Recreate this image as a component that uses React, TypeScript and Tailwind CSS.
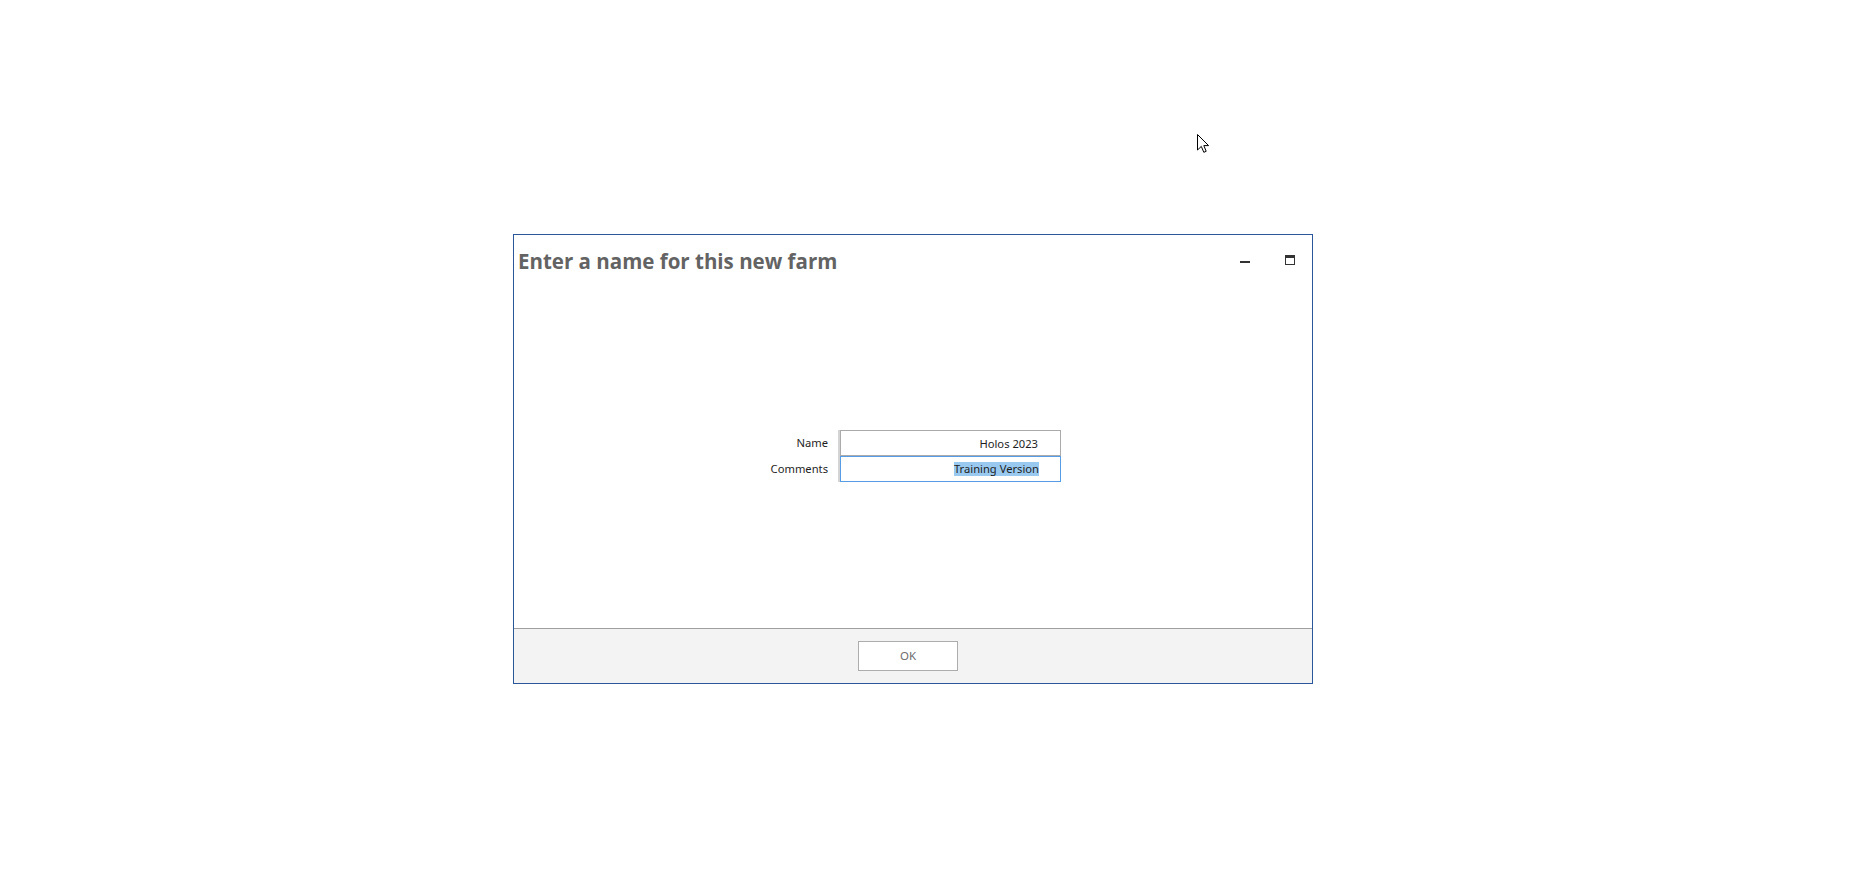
import { useState } from "react";

function Cursor() {
    return (
        <svg width="13" height="20" viewBox="0 0 13 20" className="absolute left-[1197px] top-[134px]">
            <path d="M0.5 0.5 L0.5 16 L4.3 12.4 L6.8 18.3 L9.2 17.3 L6.8 11.6 L11.6 11.6 Z" fill="#fff" stroke="#000" strokeWidth="1" strokeLinejoin="miter" />
        </svg>
    );
}

export default function App() {
    const [name, setName] = useState("Holos 2023");
    const [comments] = useState("Training Version");

    return (
        <div className="relative h-[896px] w-full overflow-hidden bg-white pl-[513px] pt-[234px] font-['Noto_Sans',sans-serif]">
            <Cursor />

            <div className="flex h-[450px] w-[800px] flex-col border border-[#2b579a] bg-white">
                {/* title bar */}
                <div className="flex h-[50px] justify-between">
                    <h1 className="pl-[4px] pt-[12px] text-[20.5px] leading-[28px] font-bold text-[#636363] font-['Open_Sans',sans-serif]">
                        Enter a name for this new farm
                    </h1>
                    <div className="flex pt-[10px]">
                        <div className="flex h-[30px] w-[45px] items-center justify-center">
                            <span className="mt-[3px] block h-[2px] w-[10px] bg-[#333]" />
                        </div>
                        <div className="flex h-[30px] w-[45px] items-center justify-center">
                            <span className="block h-[10px] w-[10px] border border-t-[3px] border-[#333]" />
                        </div>
                    </div>
                </div>

                {/* form */}
                <div className="flex-1 pl-[244px] pt-[145px]">
                    <div className="flex text-[11.2px] text-[#1e1e1e]">
                        <div className="flex w-[70px] flex-col">
                            <div className="flex h-[26px] items-center justify-end">Name</div>
                            <div className="flex h-[26px] items-center justify-end">Comments</div>
                        </div>
                        <div className="ml-[10px] w-[2px] bg-[#d4d4d4]" />
                        <div className="flex w-[221px] flex-col">
                            <input
                                value={name}
                                onChange={(e) => setName(e.target.value)}
                                className="h-[26px] w-full border border-[#ababab] bg-white pr-[22px] text-right text-[11.2px] text-[#1e1e1e] outline-none"
                            />
                            <div className="flex h-[26px] w-full items-center justify-end border border-[#569de5] bg-white pr-[21px]">
                                <span className="bg-[#99c9ef] leading-[14px] text-[#1e1e1e]">{comments}</span>
                            </div>
                        </div>
                    </div>
                </div>

                {/* footer */}
                <div className="h-[55px] border-t border-[#a0a0a0] bg-[#f3f3f3] pl-[344px] pt-[12px]">
                    <button className="h-[30px] w-[100px] border border-[#adadad] bg-white text-[11.5px] text-[#6d6d6d]">
                        OK
                    </button>
                </div>
            </div>
        </div>
    );
}
